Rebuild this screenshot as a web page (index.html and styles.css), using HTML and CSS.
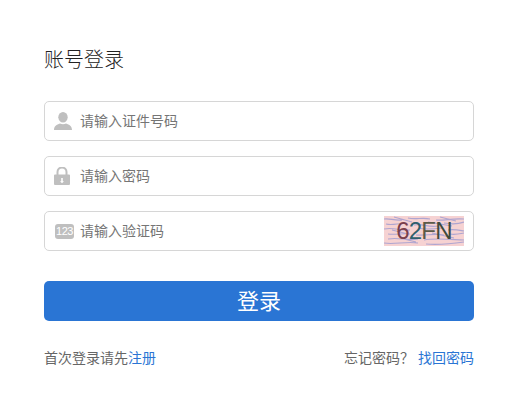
FILE: index.html
```html
<!DOCTYPE html>
<html lang="zh-CN">
<head>
<meta charset="utf-8">
<title>账号登录</title>
<link rel="stylesheet" href="styles.css">
</head>
<body>
<main class="login">
  <h1 class="title">账号登录</h1>
  <form class="form">
    <label class="field">
      <svg class="icon" viewBox="0 0 18 18" width="18" height="18"><ellipse cx="9" cy="5.200" rx="4.700" ry="5.200" fill="#bfbfbf"/><path d="M0 18c0-4 2.600-5.600 6-6.600 1.800 1 4.200 1 6 0 3.400 1 6 2.600 6 6.600z" fill="#bfbfbf"/></svg>
      <span class="hint">请输入证件号码</span>
    </label>
    <label class="field">
      <svg class="icon icon-lock" viewBox="0 0 16 18" width="16" height="18"><path d="M3.500 8V5a4.500 4.500 0 0 1 9 0v3" fill="none" stroke="#bfbfbf" stroke-width="2"/><path fill-rule="evenodd" d="M1 7.500h14a1 1 0 0 1 1 1V17a1 1 0 0 1-1 1H1a1 1 0 0 1-1-1V8.500a1 1 0 0 1 1-1zM7.200 11v3.200H6l2 2 2-2H8.800V11z" fill="#bfbfbf"/></svg>
      <span class="hint">请输入密码</span>
    </label>
    <label class="field">
      <span class="badge">123</span>
      <span class="hint">请输入验证码</span>
      <span class="captcha">
        <svg class="noise" viewBox="0 0 80 30" width="80" height="30"><path d="M0 3c6-1 10 2 18 1M24 2c8 2 14-1 22 1M52 4c8 1 16-2 28-1M2 8c8 2 14-2 22 0M30 9c8-2 14 3 24 1M60 7c6 1 12 2 20-1M0 13c10-2 16 2 26 1M34 12c8 2 16 1 24 0M64 14c6-1 10 0 16 1M4 18c8 1 14-1 22 0M32 19c10 1 18-2 28 0M66 18c5 1 9 0 14-1M4 23c12-2 18 2 30 0M40 24c10-2 20-1 40 0M0 27c10 2 22-2 34 0M42 28c12 1 24 0 38-2M10 1l18 5M44 6l24 4M8 14l16 4M48 17l22 5M16 22l16 4M56 1l16 4" fill="none" stroke="#a29dd0" stroke-width="1.200" opacity=".85"/></svg>
        <span class="code"><span class="c1">6</span><span class="c2">2</span><span class="c3">F</span><span class="c4">N</span></span>
      </span>
    </label>
    <button class="submit" type="button"><span class="submit-label">登录</span></button>
  </form>
  <div class="links">
    <span>首次登录请先<a class="link" href="#">注册</a></span>
    <span>忘记密码？<a class="link link-gap" href="#">找回密码</a></span>
  </div>
</main>
</body>
</html>
```
FILE: styles.css
```css
* { box-sizing: border-box; }
html, body { margin: 0; background: #fff; }
body { font-family: "Noto Sans CJK SC", "Liberation Sans", sans-serif; }
.login { width: 510px; padding: 44px 36px 0 44px; }
.title { margin: 0 0 27px; font-size: 20px; line-height: 30px; font-weight: 300; color: #222; }
.form { display: flex; flex-direction: column; gap: 15px; }
.field { display: flex; align-items: center; height: 40px; padding-left: 9px; border: 1px solid #d6d6d6; border-radius: 5px; background: #fff; }
.icon { flex: none; margin-right: 8px; }
.icon-lock { margin-right: 10px; }
.hint { padding-bottom: 2px; font-size: 14px; color: #757575; }
.badge { flex: none; width: 19px; height: 15px; margin: 0 6px 0 1px; border-radius: 3px; background: #bfbfbf; color: #fff; font: 11px/15px "Liberation Sans", sans-serif; letter-spacing: -.4px; text-align: center; }
.captcha { position: relative; display: flex; align-items: center; justify-content: center; width: 80px; height: 30px; margin-left: auto; margin-right: 9px; background: #f6d2d2; overflow: hidden; }
.noise { position: absolute; inset: 0; }
.code { position: relative; font: 24px/30px "Liberation Sans", sans-serif; letter-spacing: -.8px; }
.c1 { color: #7a3f4c; }
.c2 { color: #2f5f6e; }
.c3 { color: #5c5a48; }
.c4 { color: #3f4a3c; }
.submit { height: 40px; margin-top: 15px; padding: 0 0 4px; border: 0; border-radius: 5px; background: #2a75d4; color: #fff; font: 22px/36px "Noto Sans CJK SC", sans-serif; }
.links { display: flex; justify-content: space-between; margin-top: 26px; font-size: 14px; line-height: 20px; color: #666; }
.link { color: #2a75d4; text-decoration: none; }
.link-gap { margin-left: 4px; }
```
